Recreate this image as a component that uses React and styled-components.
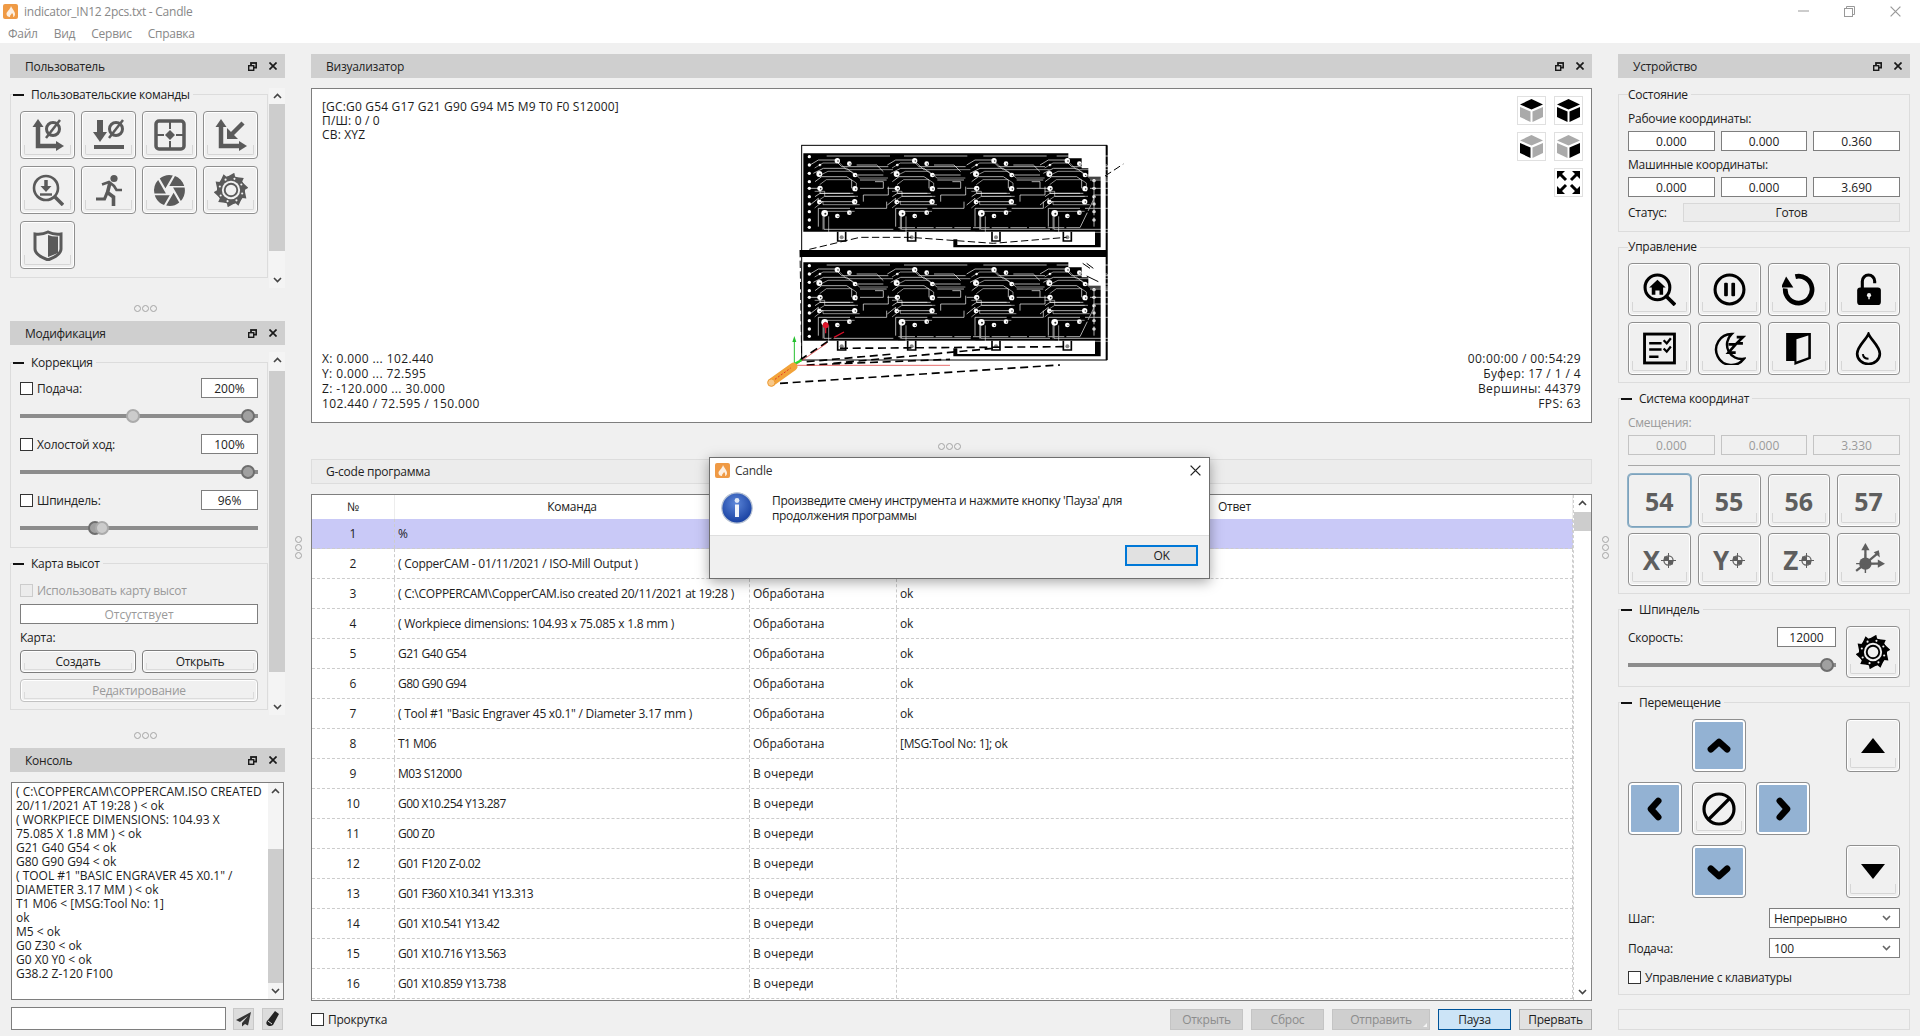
import React from 'react'
import styled, { createGlobalStyle } from 'styled-components'
import { MdCamera } from 'react-icons/md'

const Global = createGlobalStyle`
	html, body { margin: 0; padding: 0; background: #f0f0f0; }
	body { font-family: "Open Sans", "Noto Sans", sans-serif; font-size: 12px; color: #1c1c1c; letter-spacing: -0.25px; }
	* { box-sizing: border-box; }
`

const Root = styled.div`
	width: 1920px;
	height: 1036px;
	display: flex;
	flex-direction: column;
	overflow: hidden;
	position: relative;
`
const TitleBar = styled.div`
	height: 22px;
	background: #fff;
	display: flex;
	align-items: center;
	padding-left: 3px;
	color: #888;
	line-height: 22px;
`
const TitleText = styled.span`
	margin: 1px 0 0 6px;
	flex: 1;
`
const WinButtons = styled.div`
	display: flex;
	align-items: center;
	margin-right: 19px;
	gap: 35px;
`
const MenuBar = styled.div`
	height: 21px;
	background: #fff;
	display: flex;
	align-items: center;
	padding: 2px 0 0 8px;
	gap: 16px;
	color: #888;
`
const Main = styled.div`
	flex: 1;
	display: flex;
	padding: 11px 10px 6px;
	min-height: 0;
`
const LeftColumn = styled.div`
	width: 275px;
	display: flex;
	flex-direction: column;
`
const CenterColumn = styled.div`
	width: 1281px;
	display: flex;
	flex-direction: column;
`
const RightColumn = styled.div`
	width: 292px;
	display: flex;
	flex-direction: column;
`
const VSplit = styled.div`
	width: 26px;
	display: flex;
	align-items: center;
	justify-content: center;
	padding-top: 11px;
`
const HSplit = styled.div`
	height: ${p => p.$h}px;
	display: flex;
	align-items: center;
	justify-content: center;
	padding: ${p => p.$pt || 0}px 4px 0 0;
`
const Dots = styled.div`
	display: flex;
	flex-direction: ${p => (p.$vertical ? 'column' : 'row')};
	gap: 1px;
	& > i {
		display: block;
		width: 7px;
		height: 7px;
		border-radius: 50%;
		border: 1px solid #a4a4a4;
	}
`
const PanelHeader = styled.div`
	height: 24px;
	flex: none;
	background: #cfcfcf;
	display: flex;
	align-items: center;
	padding-left: 15px;
	padding-right: 8px;
	color: #222;
`
const PanelTitle = styled.span`
	flex: 1;
`
const HeaderIcons = styled.div`
	display: flex;
	align-items: center;
	gap: 12px;
`
const PanelBody = styled.div`
	display: flex;
	height: ${p => p.$h}px;
	margin-top: ${p => p.$mt}px;
	flex: none;
`
const GroupStack = styled.div`
	width: 258px;
	margin-right: 1px;
	padding-top: ${p => p.$pt}px;
	display: flex;
	flex-direction: column;
	gap: 15px;
`
const GroupBox = styled.div`
	position: relative;
	border: 1px solid #dcdcdc;
	height: ${p => p.$h}px;
	flex: none;
	padding: ${p => p.$pt || 16}px 9px 0;
`
const GroupTitle = styled.div`
	position: absolute;
	top: ${p => p.$top || -8}px;
	left: ${p => (p.$dash ? 2 : 9)}px;
	background: #f0f0f0;
	padding-right: 3px;
	display: flex;
	align-items: center;
	line-height: 16px;
	&::before {
		content: ${p => (p.$dash ? "''" : 'none')};
		width: 11px;
		height: 2px;
		background: #111;
		margin-right: 7px;
	}
`
const ScrollTrack = styled.div`
	width: ${p => p.$w || 16}px;
	flex: none;
	background: ${p => p.$bg || '#f4f4f4'};
	display: flex;
	flex-direction: column;
	align-items: center;
	border-left: ${p => (p.$line ? '1px dashed #cfcfcf' : 'none')};
`
const ScrollArrow = styled.div`
	height: 16px;
	flex: none;
	display: flex;
	align-items: center;
	justify-content: center;
`
const ScrollThumb = styled.div`
	width: 100%;
	flex: none;
	background: #cdcdcd;
	margin-top: ${p => p.$before}px;
	height: ${p => p.$size}px;
`
const ScrollSpace = styled.div`
	flex: 1;
`

/* icon buttons */
const IconGrid = styled.div`
	display: grid;
	grid-template-columns: repeat(4, 55px);
	grid-auto-rows: 48px;
	column-gap: 6px;
	row-gap: 7px;
`
const FourGrid = styled.div`
	display: grid;
	grid-template-columns: repeat(4, 1fr);
	grid-auto-rows: 53px;
	column-gap: 7px;
	row-gap: 6px;
`
const BevelButton = styled.div`
	position: relative;
	border: 1px solid #8f8f8f;
	border-radius: 4px;
	background: ${p => (p.$blue ? '#93b2d3' : '#f0f0f0')};
	box-shadow: inset 0 0 0 ${p => (p.$blue ? '2px' : '1px')} #fff;
	display: flex;
	align-items: center;
	justify-content: center;
	gap: 1px;
	color: #5e5e5e;
	font-weight: 700;
	font-size: ${p => (p.$big ? 25 : 26)}px;
	letter-spacing: 0;
	${p => p.$focus && 'border: 1px solid #7da2bd; box-shadow: 0 0 0 1px #8fb2c8;'}
	&::after {
		content: ${p => (p.$blue || p.$focus ? 'none' : "''")};
		position: absolute;
		left: 3px;
		right: 3px;
		bottom: 3px;
		height: 9px;
		border: 1px solid #d6d6d6;
		border-top: none;
		border-radius: 0 0 2px 2px;
		pointer-events: none;
	}
	& > * {
		position: relative;
		z-index: 1;
	}
`
const TextButton = styled.div`
	height: 23px;
	margin-top: ${p => p.$mt || 0}px;
	border: 1px solid ${p => (p.$disabled ? '#c2c2c2' : '#7d7d7d')};
	border-radius: 4px;
	color: ${p => (p.$disabled ? '#9a9a9a' : '#1c1c1c')};
	display: flex;
	align-items: center;
	justify-content: center;
	position: relative;
	box-shadow: inset 0 0 0 1px #fff;
	&::after {
		content: '';
		position: absolute;
		left: 3px;
		right: 3px;
		bottom: 2px;
		height: 6px;
		border: 1px solid #dcdcdc;
		border-top: none;
	}
`
const TwoButtons = styled.div`
	display: grid;
	grid-template-columns: 1fr 1fr;
	column-gap: 6px;
	margin-top: 4px;
`

/* readouts and labels */
const Readout = styled.div`
	height: 20px;
	width: ${p => p.$w || 'auto'};
	flex: none;
	border: 1px solid ${p => (p.$off ? '#c4c4c4' : '#7e7e7e')};
	background: ${p => (p.$off ? 'transparent' : '#fff')};
	color: ${p => (p.$off ? '#9a9a9a' : '#222')};
	letter-spacing: 0;
	display: flex;
	align-items: center;
	justify-content: center;
`
const MapStatus = styled(Readout)`
	margin-top: 4px;
	color: #9a9a9a;
`
const Label = styled.div`
	line-height: 16px;
	height: 16px;
	color: ${p => (p.$off ? '#9a9a9a' : '#222')};
	margin-top: ${p => p.$mt || 0}px;
`
const CoordRow = styled.div`
	display: grid;
	grid-template-columns: repeat(3, 1fr);
	column-gap: 6px;
	margin-top: 4px;
`
const StatusRow = styled.div`
	display: flex;
	align-items: center;
	margin-top: 6px;
	height: 19px;
`
const StatusBox = styled.div`
	width: 217px;
	height: 19px;
	margin-left: auto;
	border: 1px solid #d8d8d8;
	background: #ececec;
	display: flex;
	align-items: center;
	justify-content: center;
`
const Separator = styled.div`
	height: 1px;
	background: #a8a8a8;
	margin: 10px 0 8px;
`

/* sliders */
const CheckRow = styled.div`
	display: flex;
	align-items: center;
	height: 20px;
	margin-top: ${p => p.$mt || 0}px;
`
const CheckBox = styled.span`
	width: 13px;
	height: 13px;
	flex: none;
	border: 1px solid ${p => (p.$off ? '#cccccc' : '#333')};
	background: ${p => (p.$off ? '#ececec' : '#fff')};
	margin-right: 4px;
`
const CheckLabel = styled.span`
	flex: 1;
	color: ${p => (p.$off ? '#9a9a9a' : '#222')};
`
const SliderWrap = styled.div`
	position: relative;
	height: 16px;
	margin: 10px 0;
	display: flex;
	align-items: center;
`
const SliderTrack = styled.div`
	flex: 1;
	height: 4px;
	background: #8c8c8c;
`
const SliderThumb = styled.div`
	position: absolute;
	top: 1px;
	left: ${p => p.$at}px;
	width: 14px;
	height: 14px;
	margin-left: -7px;
	border-radius: 50%;
	background: ${p => (p.$light ? '#cccccc' : '#a0a0a0')};
	border: 2px solid ${p => (p.$light ? '#ababab' : '#6e6e6e')};
`

/* spindle + jog */
const SpindleRow = styled.div`
	display: flex;
	gap: 10px;
`
const SpindleLeft = styled.div`
	flex: 1;
	padding-top: 1px;
`
const SpindleTop = styled.div`
	display: flex;
	align-items: center;
	justify-content: space-between;
`
const SpindleButton = styled(BevelButton)`
	width: 54px;
	height: 52px;
	flex: none;
`
const JogGrid = styled.div`
	display: grid;
	grid-template-columns: 54px 54px 54px 16px 54px;
	grid-auto-rows: 53px;
	gap: 10px;
`
const JogCell = styled(BevelButton)`
	grid-column: ${p => p.$c};
	grid-row: ${p => p.$r};
`
const SelectRow = styled.div`
	display: flex;
	align-items: center;
	justify-content: space-between;
	margin-top: 10px;
`
const SelectBox = styled.div`
	width: 131px;
	height: 20px;
	border: 1px solid #7e7e7e;
	background: #fff;
	display: flex;
	align-items: center;
	justify-content: space-between;
	padding: 0 8px 0 4px;
`
const BottomBox = styled.div`
	height: 21px;
	margin-top: 14px;
	border: 1px solid #dcdcdc;
`
const RightStack = styled.div`
	margin-top: 16px;
	display: flex;
	flex-direction: column;
	gap: 15px;
`

/* console */
const ConsoleBox = styled.div`
	margin: 10px 1px 0;
	height: 218px;
	border: 1px solid #7e7e7e;
	background: #fff;
	display: flex;
	flex: none;
`
const ConsoleText = styled.div`
	flex: 1;
	padding: 2px 0 0 4px;
	line-height: 14px;
	letter-spacing: 0;
	white-space: pre;
	overflow: hidden;
`
const ConsoleInputRow = styled.div`
	display: flex;
	margin: 7px 1px 0;
	height: 23px;
	align-items: center;
`
const ConsoleInput = styled.div`
	width: 215px;
	flex: none;
	height: 23px;
	border: 1px solid #7e7e7e;
	background: #fff;
	margin-right: 7px;
`
const ToolButton = styled.div`
	width: 21px;
	height: 22px;
	flex: none;
	background: #dcdcdc;
	border: 1px solid #c8c8c8;
	display: flex;
	align-items: center;
	justify-content: center;
	& + & {
		margin-left: 8px;
	}
`

/* visualizer */
const Viewer = styled.div`
	position: relative;
	margin-top: 10px;
	height: 335px;
	flex: none;
	border: 1px solid #7e7e7e;
	background: #fff;
	display: flex;
	flex-direction: column;
	justify-content: space-between;
	padding: 11px 10px 11px 10px;
`
const InfoBlock = styled.div`
	line-height: ${p => p.$lh}px;
	letter-spacing: ${p => p.$track}px;
	white-space: pre;
	text-align: ${p => p.$align || 'left'};
`
const InfoRow = styled.div`
	display: flex;
	justify-content: space-between;
`
const PcbDrawing = styled.svg`
	position: absolute;
	left: 448px;
	top: 41px;
`
const ViewButtons = styled.div`
	position: absolute;
	right: 8px;
	top: 7px;
	display: grid;
	grid-template-columns: 29px 29px;
	grid-auto-rows: 29px;
	gap: 7px 8px;
`
const ViewButton = styled.div`
	grid-column: ${p => p.$c};
	border: 1px solid #e0e0e0;
	background: #fff;
	display: flex;
	align-items: center;
	justify-content: center;
`

/* g-code table */
const GcodeHeader = styled.div`
	height: 25px;
	flex: none;
	background: #ececec;
	border: 1px solid #dddddd;
	display: flex;
	align-items: center;
	padding-left: 14px;
	color: #222;
`
const Table = styled.div`
	margin-top: 10px;
	height: 507px;
	flex: none;
	border: 1px solid #7e7e7e;
	background: #fff;
	display: flex;
`
const TableInner = styled.div`
	flex: 1;
	overflow: hidden;
`
const Row = styled.div`
	display: grid;
	grid-template-columns: 83px 355px 147px 1fr;
	height: ${p => (p.$head ? 24 : 30)}px;
	background: ${p => (p.$active ? '#c9c9f7' : '#fff')};
	border-bottom: ${p => (p.$head ? 'none' : '1px dashed #cccccc')};
`
const HeadCell = styled.div`
	display: flex;
	align-items: center;
	justify-content: center;
	padding-bottom: 1px;
	border-right: 1px solid #ededed;
`
const Cell = styled.div`
	display: flex;
	align-items: center;
	justify-content: ${p => (p.$center ? 'center' : 'flex-start')};
	padding: 0 0 1px ${p => (p.$center ? 0 : 3)}px;
	border-right: 1px dashed #cccccc;
	letter-spacing: ${p => p.$track || 0}px;
	white-space: nowrap;
	overflow: hidden;
`
const BottomBar = styled.div`
	margin-top: 8px;
	height: 21px;
	display: flex;
	align-items: center;
`
const BarButton = styled.div`
	width: ${p => p.$w || 73}px;
	height: 21px;
	margin-left: 8px;
	display: flex;
	align-items: center;
	justify-content: center;
	position: relative;
	background: ${p => (p.$kind === 'primary' ? '#cce4f7' : p.$kind === 'normal' ? '#e1e1e1' : '#cfcfcf')};
	border: 1px solid ${p => (p.$kind === 'primary' ? '#005499' : p.$kind === 'normal' ? '#adadad' : '#c4c4c4')};
	color: ${p => (p.$kind ? '#1c1c1c' : '#8c8c8c')};
`
const Spacer = styled.div`
	flex: 1;
`
const MenuMark = styled.span`
	position: absolute;
	right: 2px;
	bottom: 2px;
	width: 0;
	height: 0;
	border-left: 4px solid transparent;
	border-bottom: 4px solid #f4f4f4;
`

/* modal */
const Modal = styled.div`
	position: absolute;
	left: 709px;
	top: 457px;
	width: 501px;
	height: 122px;
	background: #fff;
	border: 1px solid #6f6f6f;
	box-shadow: 0 3px 12px rgba(0, 0, 0, 0.35);
	display: flex;
	flex-direction: column;
`
const ModalTitle = styled.div`
	height: 25px;
	display: flex;
	align-items: center;
	padding: 0 8px 0 5px;
	flex: none;
`
const ModalCaption = styled.span`
	flex: 1;
	margin-left: 5px;
	color: #333;
`
const ModalContent = styled.div`
	flex: 1;
	display: flex;
	align-items: center;
	padding: 0 0 3px 11px;
	gap: 19px;
`
const ModalText = styled.div`
	line-height: 15px;
	letter-spacing: -0.33px;
	white-space: pre;
`
const ModalFooter = styled.div`
	height: 43px;
	flex: none;
	background: #f0f0f0;
	border-top: 1px solid #dfdfdf;
	display: flex;
	align-items: center;
	justify-content: flex-end;
	padding: 0 11px 3px 0;
`
const OkButton = styled.div`
	width: 73px;
	height: 21px;
	background: #e1e1e1;
	border: 2px solid #0078d7;
	display: flex;
	align-items: center;
	justify-content: center;
`
const TargetMark = styled.svg`
	margin-top: 1px;
`

/* ---- drawings ---- */
const DOCK = '#1a1a1a'

const FloatIcon = () => (
	<svg width="9" height="9" viewBox="0 0 9 9" fill="none" stroke={DOCK} strokeWidth="1.4">
		<rect x="3" y="1" width="5.3" height="4.6" strokeWidth="1.8" />
		<rect x="0.7" y="3.7" width="5" height="4.6" fill="#cfcfcf" />
	</svg>
)
const CloseIcon = ({ size = 8, color = DOCK, width = 1.9 }) => (
	<svg width={size} height={size} viewBox="0 0 9 9" stroke={color} strokeWidth={width}>
		<path d="M.5 .5 L8.5 8.5 M8.5 .5 L.5 8.5" />
	</svg>
)
const Flame = ({ size = 15 }) => (
	<svg width={size} height={size} viewBox="0 0 15 15">
		<rect width="15" height="15" rx="2" fill="#ef9a45" />
		<path d="M8 2 C9 5 12 7 12 10 C12 12 11 13 10 13 C10.6 11 10 10 9 9 C8.5 10.5 7 10.5 7 13 C5 13 3.5 12 3.5 10 C3.5 7.5 7 6 8 2 Z" fill="#fff" opacity=".85" />
	</svg>
)
const Chevron = ({ dir = 'up', color = '#444' }) => (
	<svg width="9" height="6" viewBox="0 0 9 6" fill="none" stroke={color} strokeWidth="1.6">
		<path d={dir === 'up' ? 'M1 5 L4.5 1.5 L8 5' : 'M1 1 L4.5 4.5 L8 1'} />
	</svg>
)

const Scrollbar = ({ before, size, w, bg, line }) => (
	<ScrollTrack $w={w} $bg={bg} $line={line}>
		<ScrollArrow><Chevron dir="up" /></ScrollArrow>
		<ScrollThumb $before={before} $size={size} />
		<ScrollSpace />
		<ScrollArrow><Chevron dir="down" /></ScrollArrow>
	</ScrollTrack>
)

const Ico = ({ size = 32, color = '#5a5a5a', children }) => (
	<svg width={size} height={size} viewBox="0 0 32 32" fill={color} stroke={color} strokeWidth="0">
		{children}
	</svg>
)

const Zero = ({ cx, cy, color }) => (
	<g fill="none" stroke={color} strokeWidth="3">
		<circle cx={cx} cy={cy} r="6.5" />
		<path d={`M${cx - 7} ${cy + 9} L${cx + 7} ${cy - 9}`} strokeWidth="2.5" />
	</g>
)
const Axes = ({ color }) => (
	<g>
		<path d="M6 6 V27 H26" fill="none" stroke={color} strokeWidth="4.5" />
		<polygon points="6,0 11.5,8 0.5,8" />
		<polygon points="32,27 24,22 24,32" />
	</g>
)

const IconZeroXY = ({ color = '#5a5a5a' }) => (
	<Ico color={color}>
		<Axes color={color} />
		<Zero cx={21} cy={10} color={color} />
	</Ico>
)
const IconZeroZ = ({ color = '#5a5a5a' }) => (
	<Ico color={color}>
		<path d="M7 1 V14" stroke={color} strokeWidth="6" />
		<polygon points="0,13 14,13 7,23" />
		<path d="M1 28 H31" stroke={color} strokeWidth="4" />
		<Zero cx={23} cy={10} color={color} />
	</Ico>
)
const IconFrame = ({ color = '#5a5a5a' }) => (
	<Ico color={color}>
		<rect x="2" y="2" width="28" height="28" rx="3" fill="none" stroke={color} strokeWidth="3.5" />
		<path d="M16 3 V10 M16 22 V29 M3 16 H10 M22 16 H29" stroke={color} strokeWidth="2" />
		<polygon points="16,11 21,16 16,21 11,16" />
	</Ico>
)
const IconToOrigin = ({ color = '#5a5a5a' }) => (
	<Ico color={color}>
		<Axes color={color} />
		<path d="M28 4 L17 15" stroke={color} strokeWidth="4.5" />
		<polygon points="12,20 12,9 23,20" />
	</Ico>
)
const IconProbe = ({ color = '#5a5a5a' }) => (
	<Ico color={color}>
		<circle cx="14" cy="14" r="12" fill="none" stroke={color} strokeWidth="2.6" />
		<path d="M23 23 L31 31" stroke={color} strokeWidth="3.5" />
		<path d="M14 6 V13" stroke={color} strokeWidth="3.5" />
		<polygon points="8.5,12 19.5,12 14,18" />
		<path d="M8 20.5 H20" stroke={color} strokeWidth="2.4" />
	</Ico>
)
const IconRun = ({ color = '#5a5a5a' }) => (
	<Ico color={color}>
		<circle cx="21" cy="4.5" r="3.6" />
		<path d="M9 10.5 L16 8 L21 12 L23.5 16 H29" fill="none" stroke={color} strokeWidth="2.6" />
		<path d="M17 8.5 L14.5 18.5 L20.5 23 V32" fill="none" stroke={color} strokeWidth="3.6" />
		<path d="M14 19 L11.5 25 H3" fill="none" stroke={color} strokeWidth="3.2" />
	</Ico>
)
const sawTeeth = () => {
	const pts = []
	const teeth = 10
	for (let i = 0; i < teeth; i++) {
		const a = (i / teeth) * Math.PI * 2
		const b = ((i + 0.8) / teeth) * Math.PI * 2
		pts.push(`${16 + 12.8 * Math.cos(a)},${16 + 12.8 * Math.sin(a)}`)
		pts.push(`${16 + 16.5 * Math.cos(b)},${16 + 16.5 * Math.sin(b)}`)
	}
	return pts.join(' ')
}
const IconSaw = ({ color = '#5a5a5a', hole = '#f0f0f0' }) => (
	<Ico size={34} color={color}>
		<polygon points={sawTeeth()} />
		<circle cx="16" cy="16" r="13.2" />
		<circle cx="16" cy="16" r="8.6" fill={hole} />
		<circle cx="16" cy="16" r="6.8" />
		<circle cx="16" cy="16" r="5" fill={hole} />
		{[0, 1, 2, 3, 4, 5, 6, 7].map(i => (
			<circle key={i} cx={16 + 11 * Math.cos((i * Math.PI) / 4 + 0.3)} cy={16 + 11 * Math.sin((i * Math.PI) / 4 + 0.3)} r="1" fill={hole} />
		))}
	</Ico>
)
const IconShield = ({ color = '#5a5a5a' }) => (
	<Ico color={color}>
		<path d="M3 5 Q10 6 16 3 Q22 6 29 5 V20 Q29 26 16 31 Q3 26 3 20 Z" fill="none" stroke={color} strokeWidth="3" />
		<path d="M16 6 Q21 8 26 7.5 V24 L16 28 Z" />
	</Ico>
)

const IconHomeProbe = () => (
	<Ico size={33} color="#000">
		<circle cx="14" cy="14" r="12" fill="none" stroke="#000" strokeWidth="3" />
		<path d="M23 23 L31 31" stroke="#000" strokeWidth="3.6" />
		<polygon points="14,6.5 22,14 19.5,14 19.5,21 16,21 16,17 12,17 12,21 8.5,21 8.5,14 6,14" />
	</Ico>
)
const IconPause = () => (
	<Ico size={33} color="#000">
		<circle cx="16" cy="16" r="14" fill="none" stroke="#000" strokeWidth="3" />
		<rect x="10.8" y="9.5" width="3.6" height="13" rx="1" />
		<rect x="17.8" y="9.5" width="3.6" height="13" rx="1" />
	</Ico>
)
const IconReset = () => (
	<Ico size={33} color="#000">
		<path d="M13 3.5 A13 13 0 1 1 3.2 15" fill="none" stroke="#000" strokeWidth="4.6" />
		<polygon points="4,3.5 11,14 -1,14" />
	</Ico>
)
const IconUnlock = () => (
	<Ico size={33} color="#000">
		<path d="M10 15 V8 A6 6 0 0 1 22 8 V10" fill="none" stroke="#000" strokeWidth="3" />
		<rect x="5" y="14" width="23" height="17" rx="3" />
		<circle cx="16.5" cy="21.5" r="2" fill="#f0f0f0" />
		<path d="M16.5 22 V25.5" stroke="#f0f0f0" strokeWidth="1.4" />
	</Ico>
)
const IconCheck = () => (
	<Ico size={33} color="#000">
		<rect x="1.5" y="2" width="29" height="28" fill="none" stroke="#000" strokeWidth="2.8" />
		<path d="M6 11 H18 M6 17 H18 M6 24 H15" stroke="#000" strokeWidth="2.4" />
		<path d="M20 8 L23 11 L27 6 M20 16 L23 19 L27 14" fill="none" stroke="#000" strokeWidth="2.2" />
	</Ico>
)
const IconSleep = () => (
	<Ico size={33} color="#000">
		<path d="M18 2 A15 15 0 1 0 30 26 A14 14 0 0 1 18 2 Z" fill="none" stroke="#000" strokeWidth="2.4" />
		<path d="M15 12 H22 L15 20 H22 M23 5 H29 L23 11 H29" fill="none" stroke="#000" strokeWidth="2.6" />
	</Ico>
)
const IconDoor = () => (
	<Ico size={33} color="#000">
		<polygon points="4,1 28,1 28,26 12,32 12,28 4,28" />
		<polygon points="14,7 25.5,3.5 25.5,24.5 14,28.5" fill="#f0f0f0" />
	</Ico>
)
const IconDrop = () => (
	<Ico size={33} color="#000">
		<path d="M16 2 C14 7 5 14 5 21 A11 10 0 0 0 27 21 C27 14 18 7 16 2 Z" fill="none" stroke="#000" strokeWidth="2.6" />
		<path d="M10.5 21.5 C11 24.5 13 26 16 26" fill="none" stroke="#000" strokeWidth="2" />
	</Ico>
)
const Target = () => (
	<TargetMark width="15" height="15" viewBox="0 0 15 15">
		<circle cx="7.5" cy="7.5" r="4.6" fill="none" stroke="#5e5e5e" strokeWidth="1.2" />
		<path d="M3 3.5 H7.5 V7.5 H12 V11.5 H7.5 V7.5 H3 Z" fill="#5e5e5e" />
		<path d="M7.5 0 V15 M0 7.5 H15" stroke="#5e5e5e" strokeWidth="1" />
	</TargetMark>
)
const IconOrigin = () => (
	<Ico size={33} color="#5e5e5e">
		<path d="M13 20 V6 M13 20 L26 9 M13 20 H29 M13 20 L4 27" fill="none" stroke="#5e5e5e" strokeWidth="2.2" />
		<polygon points="13,0 17,7 9,7" />
		<polygon points="26,7 27,14 21,9" />
		<polygon points="32,20 25,16 25,24" />
		<circle cx="13" cy="20" r="6" />
		<path d="M4 20 H22 M13 11 V29" stroke="#5e5e5e" strokeWidth="1.4" />
	</Ico>
)
const ChevronBig = ({ dir }) => {
	const d = {
		up: 'M6 20 L16 11 L26 20',
		down: 'M6 12 L16 21 L26 12',
		left: 'M20 6 L11 16 L20 26',
		right: 'M12 6 L21 16 L12 26',
	}[dir]
	return (
		<svg width="26" height="26" viewBox="0 0 32 32" fill="none" stroke="#000" strokeWidth="8" strokeLinecap="round" strokeLinejoin="round">
			<path d={d} />
		</svg>
	)
}
const Stop = () => (
	<svg width="34" height="34" viewBox="0 0 34 34" fill="none" stroke="#000" strokeWidth="3.2">
		<circle cx="17" cy="17" r="15" />
		<path d="M7 27 L27 7" />
	</svg>
)
const Triangle = ({ down }) => (
	<svg width="24" height="15" viewBox="0 0 24 15">
		<polygon points={down ? '0,0 24,0 12,15' : '12,0 24,15 0,15'} fill="#000" />
	</svg>
)
const Cube = ({ top, left, right }) => (
	<svg width="25" height="25" viewBox="0 0 25 25">
		<polygon points="12.5,1 24,6.5 12.5,11.5 1,6.5" fill={top} />
		<polygon points="1,9 11.5,13.5 11.5,24 1,19" fill={left} />
		<polygon points="24,9 13.5,13.5 13.5,24 24,19" fill={right} />
	</svg>
)
const Fullscreen = () => (
	<svg width="25" height="25" viewBox="0 0 25 25" fill="#000" stroke="#000">
		<polygon points="1,1 9,1 1,9" strokeWidth="0" />
		<path d="M3 3 L10 10 M22 3 L15 10 M3 22 L10 15 M22 22 L15 15" strokeWidth="3" />
		<polygon points="24,1 16,1 24,9" strokeWidth="0" />
		<polygon points="1,24 9,24 1,16" strokeWidth="0" />
		<polygon points="24,24 16,24 24,16" strokeWidth="0" />
	</svg>
)
const SendIcon = () => (
	<svg width="17" height="16" viewBox="0 0 17 16" fill="#333">
		<polygon points="16,1 1,9 5,11 13,5 7,12 7,15.5 10,13 13,14.5" />
	</svg>
)
const EraseIcon = () => (
	<svg width="15" height="17" viewBox="0 0 15 17">
		<path d="M10 1 L14 4 L8 15 C6 16.5 3 16.5 1.5 14 C1 12 2 11 3 10 Z" fill="#222" />
		<path d="M3 11 L7 14" stroke="#ddd" strokeWidth="1" />
	</svg>
)
const InfoIcon = () => (
	<svg width="32" height="32" viewBox="0 0 32 32">
		<defs>
			<radialGradient id="infoBlue" cx="45%" cy="35%" r="70%">
				<stop offset="0%" stopColor="#5c86d8" />
				<stop offset="100%" stopColor="#123a9c" />
			</radialGradient>
		</defs>
		<circle cx="16" cy="16" r="15.2" fill="url(#infoBlue)" stroke="#b9c4d4" strokeWidth="1.2" />
		<circle cx="16" cy="8.5" r="2.4" fill="#dfe8f6" />
		<path d="M16 12.5 V25" stroke="#f2f5fb" strokeWidth="4" />
	</svg>
)

/* one module of the etched board, repeated along each panel */
const MODULE_TRACES = [
	'M150 105 L175 90 H225 L245 110 H385',
	'M160 130 L190 115 H260 L285 135 H370',
	'M165 155 L185 140 H260 L275 150 V175',
	'M150 175 H180 V190 H280',
	'M165 200 L180 190 H270',
	'M150 225 L175 205 V215 H285',
	'M175 290 V235 H270',
	'M192 250 V298 H400',
	'M300 175 H370 V155 H345',
	'M310 215 V195 H385 V170',
	'M285 235 H380 V215',
	'M290 105 H350 L370 125',
	'M200 78 H390',
	'M300 150 H380',
]
const MODULE_PADS = [
	[232, 92, 8], [268, 101, 7], [178, 132, 9], [285, 135, 7], [180, 175, 8], [285, 176, 8],
	[284, 215, 8], [178, 216, 7], [194, 250, 10], [232, 258, 7], [268, 248, 7], [180, 105, 4],
]
const EDGE_PADS = [80, 105, 130, 155, 175, 200, 222, 245, 270, 292]
const RIGHT_PADS = [152, 175, 200, 222, 245, 270]
const Board = ({ dy }) => (
	<g transform={`translate(0 ${dy})`}>
		<polygon points="130,70 925,70 925,85 965,85 965,115 985,115 985,140 1022,140 1022,352 580,352 580,328 592,328 592,345 1005,345 1005,305 130,305" fill="#000" />
		{[0, 232, 470, 690].map(x => (
			<g key={x} transform={`translate(${x} 0)`}>
				{MODULE_TRACES.map(d => (
					<path key={d} d={d} fill="none" stroke="#fff" strokeWidth="2" />
				))}
				{MODULE_TRACES.slice(0, 8).map(d => (
					<path key={d} d={d} fill="none" stroke="#fff" strokeWidth="1.6" transform="translate(14 9)" />
				))}
				{MODULE_PADS.map(([cx, cy, r]) => (
					<g key={`${cx}-${cy}`}>
						<circle cx={cx} cy={cy} r={r} fill="#fff" />
						<circle cx={cx + 2} cy={cy + 1} r={r * 0.3} fill="#333" />
					</g>
				))}
			</g>
		))}
		{EDGE_PADS.map(y => <circle key={y} cx="148" cy={y} r="5" fill="#fff" />)}
		{RIGHT_PADS.map(y => <circle key={y} cx="1002" cy={y} r="5" fill="#fff" />)}
		<path d="M1002 150 V290 M415 293 H960 M960 293 L1005 200" fill="none" stroke="#aaa" strokeWidth="3" strokeDasharray="50 6" />
		{[245, 455, 708, 922].map(x => (
			<g key={x}>
				<path d={`M${x - 12} 305 V333 H${x + 12} V305`} fill="none" stroke="#000" strokeWidth="5" />
				<circle cx={x} cy={322} r="6" fill="#888" />
			</g>
		))}
	</g>
)
const PcbArt = () => (
	<PcbDrawing width="400" height="280" viewBox="0 0 1200 840">
		<rect x="125" y="46" width="915" height="644" fill="none" stroke="#000" strokeWidth="3" />
		<path d="M1040 46 V690" stroke="#000" strokeWidth="6" />
		<rect x="120" y="360" width="920" height="21" fill="#000" />
		<Board dy={0} />
		<Board dy={327} />
		<path d="M148 358 L300 322 H450 L700 340 L920 322 M1035 138 L1090 102 M120 360 L125 690" fill="none" stroke="#000" strokeWidth="3" strokeDasharray="22 10" />
		<path d="M60 760 L900 705 M140 705 L570 688 M140 695 L400 672 M220 700 L700 655 M240 655 L920 650 M120 690 L240 610" fill="none" stroke="#000" strokeWidth="5" strokeDasharray="24 14" />
		<path d="M968 400 L990 415 M980 400 L1000 415 M980 438 L1015 455" stroke="#000" strokeWidth="3" />
		<path d="M105 706 L200 640 M105 706 H570" fill="none" stroke="#d22" strokeWidth="2" />
		<path d="M197 590 V610 M222 622 L252 606" stroke="#d8102a" strokeWidth="4" />
		<circle cx="197" cy="586" r="9" fill="#e0182c" />
		<path d="M103 700 V630" stroke="#25c02e" strokeWidth="3" />
		<polygon points="103,618 109,636 97,636" fill="#25c02e" />
		<path d="M103 702 L125 690" stroke="#25e02e" strokeWidth="6" />
		<path d="M36 756 L100 710" stroke="#f2a33a" strokeWidth="24" strokeLinecap="round" />
		<circle cx="34" cy="758" r="11" fill="#f8c888" stroke="#ee9a30" strokeWidth="3" />
		<path d="M45 748 L92 714" stroke="#e02020" strokeWidth="2.5" strokeDasharray="6 5" />
	</PcbDrawing>
)

const Slider = ({ thumbs }) => (
	<SliderWrap>
		<SliderTrack />
		{thumbs.map(t => (
			<SliderThumb key={t.at} $light={t.light} $at={t.at} />
		))}
	</SliderWrap>
)
const Panel = ({ title }) => (
	<PanelHeader>
		<PanelTitle>{title}</PanelTitle>
		<HeaderIcons>
			<FloatIcon />
			<CloseIcon />
		</HeaderIcons>
	</PanelHeader>
)
const ThreeDots = ({ vertical }) => (
	<Dots $vertical={vertical}>
		<i />
		<i />
		<i />
	</Dots>
)

const CONSOLE = `( C:\\COPPERCAM\\COPPERCAM.ISO CREATED
20/11/2021 AT 19:28 ) < ok
( WORKPIECE DIMENSIONS: 104.93 X
75.085 X 1.8 MM ) < ok
G21 G40 G54 < ok
G80 G90 G94 < ok
( TOOL #1 "BASIC ENGRAVER 45 X0.1" /
DIAMETER 3.17 MM ) < ok
T1 M06 < [MSG:Tool No: 1]
ok
M5 < ok
G0 Z30 < ok
G0 X0 Y0 < ok
G38.2 Z-120 F100`

const DONE = 'Обработана'
const QUEUED = 'В очереди'
// the first two rows run under the message box, so their status and answer do not show
const ROWS = [
	['%', '', ''],
	['( CopperCAM - 01/11/2021 / ISO-Mill Output )', '', ''],
	['( C:\\COPPERCAM\\CopperCAM.iso created 20/11/2021 at 19:28 )', DONE, 'ok'],
	['( Workpiece dimensions: 104.93 x 75.085 x 1.8 mm )', DONE, 'ok'],
	['G21 G40 G54', DONE, 'ok'],
	['G80 G90 G94', DONE, 'ok'],
	['( Tool #1 "Basic Engraver 45 x0.1" / Diameter 3.17 mm )', DONE, 'ok'],
	['T1 M06', DONE, '[MSG:Tool No: 1]; ok'],
	['M03 S12000', QUEUED, ''],
	['G00 X10.254 Y13.287', QUEUED, ''],
	['G00 Z0', QUEUED, ''],
	['G01 F120 Z-0.02', QUEUED, ''],
	['G01 F360 X10.341 Y13.313', QUEUED, ''],
	['G01 X10.541 Y13.42', QUEUED, ''],
	['G01 X10.716 Y13.563', QUEUED, ''],
	['G01 X10.859 Y13.738', QUEUED, ''],
]

const B = '#000'
const G = '#aaaaaa'

export default function App() {
	return (
		<Root>
			<Global />
			<TitleBar>
				<Flame />
				<TitleText>indicator_IN12 2pcs.txt - Candle</TitleText>
				<WinButtons>
					<svg width="11" height="2" viewBox="0 0 11 2"><path d="M0 1 H11" stroke="#999" /></svg>
					<svg width="11" height="11" viewBox="0 0 11 11" fill="none" stroke="#999"><rect x=".5" y="2.5" width="8" height="8" /><path d="M2.5 2.5 V.5 H10.5 V8.5 H8.5" /></svg>
					<CloseIcon size={11} color="#999" width={1} />
				</WinButtons>
			</TitleBar>
			<MenuBar>
				<span>Файл</span>
				<span>Вид</span>
				<span>Сервис</span>
				<span>Справка</span>
			</MenuBar>
			<Main>
				<LeftColumn>
					<Panel title="Пользователь" />
					<PanelBody $h={200} $mt={10}>
						<GroupStack $pt={6}>
							<GroupBox $h={184}>
								<GroupTitle $dash>Пользовательские команды</GroupTitle>
								<IconGrid>
									<BevelButton><IconZeroXY /></BevelButton>
									<BevelButton><IconZeroZ /></BevelButton>
									<BevelButton><IconFrame /></BevelButton>
									<BevelButton><IconToOrigin /></BevelButton>
									<BevelButton><IconProbe /></BevelButton>
									<BevelButton><IconRun /></BevelButton>
									<BevelButton><MdCamera size={37} color="#5a5a5a" /></BevelButton>
									<BevelButton><IconSaw /></BevelButton>
									<BevelButton><IconShield /></BevelButton>
								</IconGrid>
							</GroupBox>
						</GroupStack>
						<Scrollbar before={0} size={147} />
					</PanelBody>
					<HSplit $h={33} $pt={7}><ThreeDots /></HSplit>
					<Panel title="Модификация" />
					<PanelBody $h={363} $mt={7}>
						<GroupStack $pt={10}>
							<GroupBox $h={186} $pt={15}>
								<GroupTitle $dash>Коррекция</GroupTitle>
								<CheckRow>
									<CheckBox />
									<CheckLabel>Подача:</CheckLabel>
									<Readout $w="57px">200%</Readout>
								</CheckRow>
								<Slider thumbs={[{ at: 113, light: true }, { at: 228 }]} />
								<CheckRow>
									<CheckBox />
									<CheckLabel>Холостой ход:</CheckLabel>
									<Readout $w="57px">100%</Readout>
								</CheckRow>
								<Slider thumbs={[{ at: 228 }]} />
								<CheckRow>
									<CheckBox />
									<CheckLabel>Шпиндель:</CheckLabel>
									<Readout $w="57px">96%</Readout>
								</CheckRow>
								<Slider thumbs={[{ at: 75 }, { at: 82, light: true }]} />
							</GroupBox>
							<GroupBox $h={147}>
								<GroupTitle $dash>Карта высот</GroupTitle>
								<CheckRow>
									<CheckBox $off />
									<CheckLabel $off>Использовать карту высот</CheckLabel>
								</CheckRow>
								<MapStatus>Отсутствует</MapStatus>
								<Label $mt={6}>Карта:</Label>
								<TwoButtons>
									<TextButton>Создать</TextButton>
									<TextButton>Открыть</TextButton>
								</TwoButtons>
								<TextButton $disabled $mt={6}>Редактирование</TextButton>
							</GroupBox>
						</GroupStack>
						<Scrollbar before={3} size={301} />
					</PanelBody>
					<HSplit $h={33} $pt={7}><ThreeDots /></HSplit>
					<Panel title="Консоль" />
					<ConsoleBox>
						<ConsoleText>{CONSOLE}</ConsoleText>
						<Scrollbar before={50} size={134} w={15} />
					</ConsoleBox>
					<ConsoleInputRow>
						<ConsoleInput />
						<ToolButton><SendIcon /></ToolButton>
						<ToolButton><EraseIcon /></ToolButton>
					</ConsoleInputRow>
				</LeftColumn>
				<VSplit><ThreeDots vertical /></VSplit>
				<CenterColumn>
					<Panel title="Визуализатор" />
					<Viewer>
						<InfoBlock $lh={14} $track={0.17}>{'[GC:G0 G54 G17 G21 G90 G94 M5 M9 T0 F0 S12000]\nП/Ш: 0 / 0\nСВ: XYZ'}</InfoBlock>
						<InfoRow>
							<InfoBlock $lh={15} $track={0.4}>{'X: 0.000 ... 102.440\nY: 0.000 ... 72.595\nZ: -120.000 ... 30.000\n102.440 / 72.595 / 150.000'}</InfoBlock>
							<InfoBlock $lh={15} $track={0.4} $align="right">{'00:00:00 / 00:54:29\nБуфер: 17 / 1 / 4\nВершины: 44379\nFPS: 63'}</InfoBlock>
						</InfoRow>
						<PcbArt />
						<ViewButtons>
							<ViewButton $c={1}><Cube top={B} left={G} right={G} /></ViewButton>
							<ViewButton $c={2}><Cube top={B} left={B} right={B} /></ViewButton>
							<ViewButton $c={1}><Cube top={G} left={B} right={G} /></ViewButton>
							<ViewButton $c={2}><Cube top={G} left={G} right={B} /></ViewButton>
							<ViewButton $c={2}><Fullscreen /></ViewButton>
						</ViewButtons>
					</Viewer>
					<HSplit $h={36} $pt={10}><ThreeDots /></HSplit>
					<GcodeHeader>G-code программа</GcodeHeader>
					<Table>
						<TableInner>
							<Row $head>
								<HeadCell>№</HeadCell>
								<HeadCell>Команда</HeadCell>
								<HeadCell />
								<HeadCell>Ответ</HeadCell>
							</Row>
							{ROWS.map((r, i) => (
								<Row key={i} $active={i === 0}>
									<Cell $center>{i + 1}</Cell>
									<Cell $track={r[0].startsWith('(') ? -0.25 : -0.5}>{r[0]}</Cell>
									<Cell>{r[1]}</Cell>
									<Cell $track={-0.3}>{r[2]}</Cell>
								</Row>
							))}
						</TableInner>
						<Scrollbar before={1} size={19} w={18} bg="#fff" line />
					</Table>
					<BottomBar>
						<CheckBox />
						<span>Прокрутка</span>
						<Spacer />
						<BarButton>Открыть</BarButton>
						<BarButton>Сброс</BarButton>
						<BarButton $w={98}>Отправить<MenuMark /></BarButton>
						<BarButton $kind="primary">Пауза</BarButton>
						<BarButton $kind="normal">Прервать</BarButton>
					</BottomBar>
				</CenterColumn>
				<VSplit><ThreeDots vertical /></VSplit>
				<RightColumn>
					<Panel title="Устройство" />
					<RightStack>
						<GroupBox $h={138}>
							<GroupTitle>Состояние</GroupTitle>
							<Label>Рабочие координаты:</Label>
							<CoordRow>
								<Readout>0.000</Readout>
								<Readout>0.000</Readout>
								<Readout>0.360</Readout>
							</CoordRow>
							<Label $mt={6}>Машинные координаты:</Label>
							<CoordRow>
								<Readout>0.000</Readout>
								<Readout>0.000</Readout>
								<Readout>3.690</Readout>
							</CoordRow>
							<StatusRow>
								<span>Статус:</span>
								<StatusBox>Готов</StatusBox>
							</StatusRow>
						</GroupBox>
						<GroupBox $h={136} $pt={15}>
							<GroupTitle $top={-9}>Управление</GroupTitle>
							<FourGrid>
								<BevelButton><IconHomeProbe /></BevelButton>
								<BevelButton><IconPause /></BevelButton>
								<BevelButton><IconReset /></BevelButton>
								<BevelButton><IconUnlock /></BevelButton>
								<BevelButton><IconCheck /></BevelButton>
								<BevelButton><IconSleep /></BevelButton>
								<BevelButton><IconDoor /></BevelButton>
								<BevelButton><IconDrop /></BevelButton>
							</FourGrid>
						</GroupBox>
						<GroupBox $h={196}>
							<GroupTitle $dash>Система координат</GroupTitle>
							<Label $off>Смещения:</Label>
							<CoordRow>
								<Readout $off>0.000</Readout>
								<Readout $off>0.000</Readout>
								<Readout $off>3.330</Readout>
							</CoordRow>
							<Separator />
							<FourGrid>
								<BevelButton $big $focus>54</BevelButton>
								<BevelButton $big>55</BevelButton>
								<BevelButton $big>56</BevelButton>
								<BevelButton $big>57</BevelButton>
								<BevelButton>X<Target /></BevelButton>
								<BevelButton>Y<Target /></BevelButton>
								<BevelButton>Z<Target /></BevelButton>
								<BevelButton><IconOrigin /></BevelButton>
							</FourGrid>
						</GroupBox>
						<GroupBox $h={78}>
							<GroupTitle $dash>Шпиндель</GroupTitle>
							<SpindleRow>
								<SpindleLeft>
									<SpindleTop>
										<span>Скорость:</span>
										<Readout $w="59px">12000</Readout>
									</SpindleTop>
									<Slider thumbs={[{ at: 199 }]} />
								</SpindleLeft>
								<SpindleButton><IconSaw color="#000" /></SpindleButton>
							</SpindleRow>
						</GroupBox>
						<GroupBox $h={293}>
							<GroupTitle $dash>Перемещение</GroupTitle>
							<JogGrid>
								<JogCell $c={2} $r={1} $blue><ChevronBig dir="up" /></JogCell>
								<JogCell $c={5} $r={1}><Triangle /></JogCell>
								<JogCell $c={1} $r={2} $blue><ChevronBig dir="left" /></JogCell>
								<JogCell $c={2} $r={2}><Stop /></JogCell>
								<JogCell $c={3} $r={2} $blue><ChevronBig dir="right" /></JogCell>
								<JogCell $c={2} $r={3} $blue><ChevronBig dir="down" /></JogCell>
								<JogCell $c={5} $r={3}><Triangle down /></JogCell>
							</JogGrid>
							<SelectRow>
								<span>Шаг:</span>
								<SelectBox>Непрерывно<Chevron dir="down" color="#666" /></SelectBox>
							</SelectRow>
							<SelectRow>
								<span>Подача:</span>
								<SelectBox>100<Chevron dir="down" color="#666" /></SelectBox>
							</SelectRow>
							<CheckRow $mt={9}>
								<CheckBox />
								<CheckLabel>Управление с клавиатуры</CheckLabel>
							</CheckRow>
						</GroupBox>
					</RightStack>
					<BottomBox />
				</RightColumn>
			</Main>
			<Modal>
				<ModalTitle>
					<Flame />
					<ModalCaption>Candle</ModalCaption>
					<CloseIcon size={11} color="#222" width={1.1} />
				</ModalTitle>
				<ModalContent>
					<InfoIcon />
					<ModalText>{"Произведите смену инструмента и нажмите кнопку 'Пауза' для\nпродолжения программы"}</ModalText>
				</ModalContent>
				<ModalFooter>
					<OkButton>OK</OkButton>
				</ModalFooter>
			</Modal>
		</Root>
	)
}
